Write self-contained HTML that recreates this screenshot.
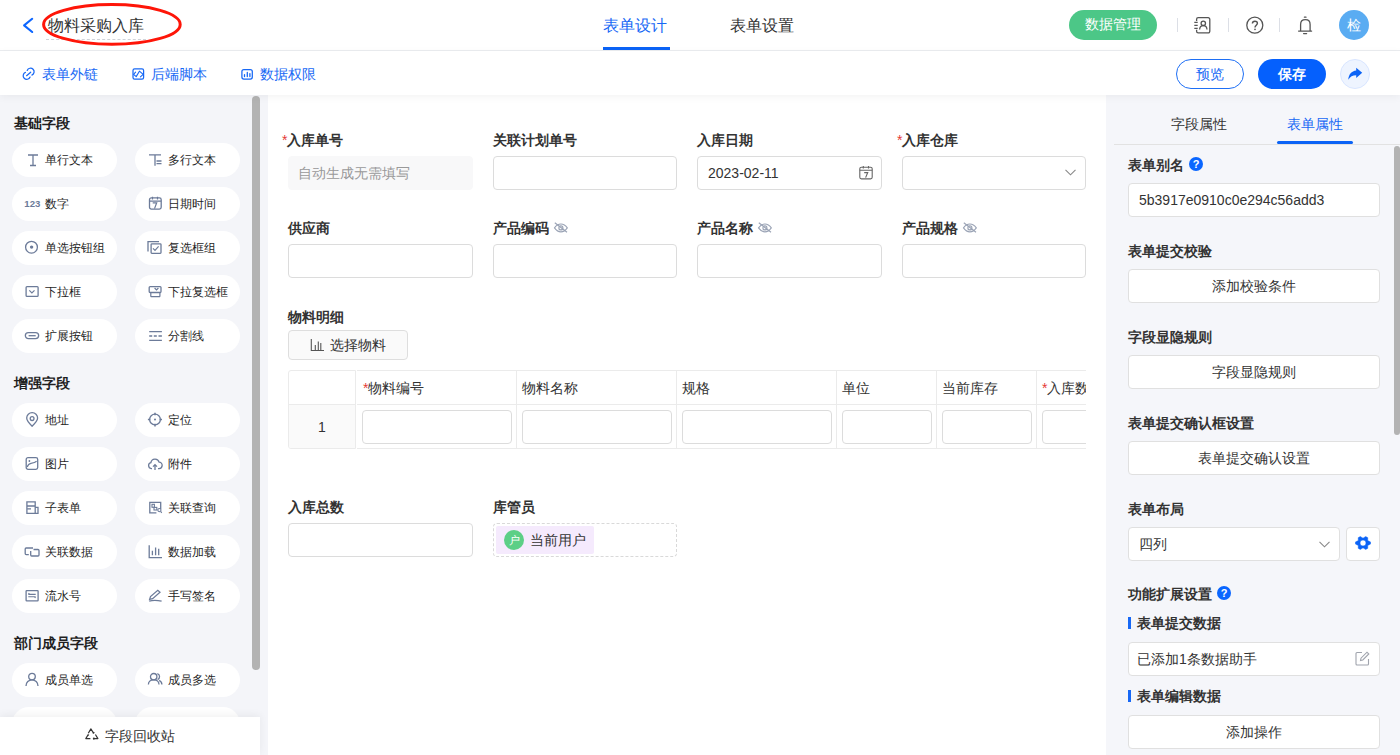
<!DOCTYPE html>
<html><head><meta charset="utf-8">
<style>
*{box-sizing:border-box;margin:0;padding:0}
html,body{width:1400px;height:755px;overflow:hidden;background:#fff;font-family:"Liberation Sans",sans-serif;color:#333}
.abs{position:absolute}
.t{position:absolute;white-space:nowrap;line-height:1}
svg{position:absolute;overflow:visible}
/* header */
#hdr{position:absolute;left:0;top:0;width:1400px;height:51px;background:#fff;border-bottom:1px solid #ebedf0}
#bar{position:absolute;left:0;top:51px;width:1400px;height:44px;background:#fff;z-index:3;box-shadow:0 2px 8px rgba(0,0,0,.05)}
#left{position:absolute;left:0;top:95px;width:268px;height:660px;background:#f4f5f9}
#canvas{position:absolute;left:268px;top:95px;width:838px;height:660px;background:#fff}
#right{position:absolute;left:1106px;top:95px;width:294px;height:660px;background:#f5f6fa}
.pill{position:absolute;width:105px;height:34px;border-radius:17px;background:#fff}
.pill span{position:absolute;left:33px;top:10px;font-size:12px;line-height:14px;color:#1f1f1f;white-space:nowrap}
.pill svg{left:12px;top:9px}
.sec{position:absolute;left:14px;font-size:14px;font-weight:bold;color:#1f1f1f;line-height:14px}
.lbl{position:absolute;font-size:14px;font-weight:bold;color:#333;line-height:14px;white-space:nowrap}
.req{color:#e53935;font-weight:normal;font-size:14px}
.inp{position:absolute;height:34px;border:1px solid #dcdcdc;border-radius:4px;background:#fff}
.rlbl{position:absolute;left:1128px;font-size:14px;font-weight:bold;color:#333;line-height:14px;white-space:nowrap}
.rbtn{position:absolute;left:1128px;width:252px;height:34px;border:1px solid #e0e0e0;border-radius:4px;background:#fff;text-align:center;font-size:14px;line-height:32px;color:#333}
.th{position:absolute;top:371px;height:34px;font-size:14px;line-height:34px;color:#333;white-space:nowrap}
</style></head>
<body>
<div id="hdr">
  <svg style="left:0;top:0" width="60" height="50" viewBox="0 0 60 50"><path d="M32.2 18.8 L24.1 25.4 L32.2 32" fill="none" stroke="#0d66ff" stroke-width="2.1" stroke-linecap="round" stroke-linejoin="round"/></svg>
  <div class="t" style="left:48px;top:18px;font-size:16px;line-height:16px;color:#333">物料采购入库</div>
  <div class="abs" style="left:46px;top:39px;width:100px;border-top:1px dashed #d0d3d9"></div>
  <svg style="left:0;top:0" width="200" height="50" viewBox="0 0 200 50"><ellipse cx="111.9" cy="24.4" rx="68.3" ry="19.8" fill="none" stroke="#fe1508" stroke-width="3"/></svg>
  <div class="t" style="left:603px;top:18px;font-size:16px;line-height:16px;color:#1768f5">表单设计</div>
  <div class="abs" style="left:603px;top:47px;width:67px;height:3px;background:#0b63f6"></div>
  <div class="t" style="left:730px;top:18px;font-size:16px;line-height:16px;color:#333">表单设置</div>
  <div class="abs" style="left:1069px;top:10px;width:88px;height:30px;border-radius:15px;background:#4cc787;color:#fff;font-size:14px;line-height:29px;text-align:center">数据管理</div>
  <div class="abs" style="left:1177px;top:18px;width:1px;height:14px;background:#dcdfe6"></div>
  <div class="abs" style="left:1228px;top:18px;width:1px;height:14px;background:#dcdfe6"></div>
  <div class="abs" style="left:1279px;top:18px;width:1px;height:14px;background:#dcdfe6"></div>
  <svg style="left:1180px;top:0" width="140" height="50" viewBox="1180 0 140 50" fill="none" stroke="#555" stroke-width="1.3">
    <path d="M1196.6 21V19.3a1.6 1.6 0 0 1 1.6-1.6H1208.2a1.6 1.6 0 0 1 1.6 1.6V31.3a1.6 1.6 0 0 1-1.6 1.6H1198.2a1.6 1.6 0 0 1-1.6-1.6V29.8"/>
    <path d="M1194.3 22.4h3.4M1194.3 25.4h3.4M1194.3 28.3h3.4"/>
    <circle cx="1203.3" cy="23.3" r="2.2"/>
    <path d="M1199.6 29.5C1199.8 27 1201.3 25.7 1203.3 25.7S1206.8 27 1207 29.5"/>
    <circle cx="1254.8" cy="25.2" r="8"/>
    <path d="M1252.4 23.4C1252.4 21.8 1253.5 21.2 1254.9 21.2 1256.5 21.2 1257.4 22.1 1257.4 23.3 1257.4 25.1 1255 25.3 1255 27.4" stroke-width="1.4"/>
    <circle cx="1255" cy="29.3" r="0.85" fill="#555" stroke="none"/>
    <path d="M1304.4 17.2h1.6M1300.6 30.4V24.4C1300.6 21.3 1302.6 19.6 1305.4 19.6 1308.2 19.6 1310.1 21.3 1310.1 24.4V30.4M1298.6 31.1H1311.6M1303.6 33.6h3" stroke-linecap="round"/>
  </svg>
  <div class="abs" style="left:1339px;top:10px;width:30px;height:30px;border-radius:15px;background:#5aacf2;color:#fff;font-size:14px;line-height:30px;text-align:center">检</div>
</div>
<div id="bar">
  <svg style="left:0;top:0" width="300" height="44" viewBox="0 51 300 44" fill="none" stroke="#1768f5" stroke-width="1.25" stroke-linecap="round">
    <path d="M27.2 70.4A3.6 3.6 0 1 1 31.9 75.1M30.1 77.1A3.6 3.6 0 1 1 25.4 72.4M26.6 75.7L30.7 72.2"/>
    <rect x="133" y="68.8" width="10.6" height="10.4" rx="1.6" stroke-linecap="butt"/>
    <path d="M135.6 72.2L133.6 74.4 136.2 76.6 139.4 71.2 143.2 74.4 140.4 76.8" stroke-width="1.1" stroke-linejoin="round"/>
    <rect x="241.9" y="69.6" width="10.4" height="9.4" rx="2" stroke-linecap="butt"/>
    <path d="M244.5 74.6v2M247.3 72.4v4.2M249.9 73.6v3" stroke-width="1.3"/>
  </svg>
  <div class="t" style="left:42px;top:16px;font-size:14px;line-height:14px;color:#1768f5">表单外链</div>
  <div class="t" style="left:151px;top:16px;font-size:14px;line-height:14px;color:#1768f5">后端脚本</div>
  <div class="t" style="left:260px;top:16px;font-size:14px;line-height:14px;color:#1768f5">数据权限</div>
  <div class="abs" style="left:1176px;top:8px;width:68px;height:30px;border-radius:15px;border:1px solid #1e6ff5;color:#1768f5;font-size:14px;line-height:28px;text-align:center">预览</div>
  <div class="abs" style="left:1258px;top:8px;width:68px;height:30px;border-radius:15px;background:#0560fd;color:#fff;font-size:14px;line-height:30px;text-align:center;font-weight:bold">保存</div>
  <div class="abs" style="left:1340px;top:8px;width:30px;height:30px;border-radius:15px;background:#eef4ff;border:1px solid #d9e6ff"></div>
  <svg style="left:1300px;top:0" width="100" height="44" viewBox="1300 51 100 44"><path d="M1362.2 72.8L1356.2 67.8V70.6C1351.6 71 1348.6 74.6 1348.3 79.8 1350.2 76.6 1352.6 75.3 1356.2 75.3V77.9Z" fill="#0b63f6"/></svg>
</div>

<div id="left">
  <div class="abs" style="left:252px;top:1px;width:8px;height:574px;border-radius:4px;background:#b3b3b3"></div>
  <div class="sec" style="top:21px">基础字段</div>
  <div class="pill" style="left:12px;top:48px"><svg width="16" height="16" viewBox="0 0 16 16" fill="none" stroke="#6c7b99" stroke-width="1.3"><path d="M4 3h10M6 13.5h6M9 3v10.5"/></svg><span>单行文本</span></div>
  <div class="pill" style="left:135px;top:48px"><svg width="16" height="16" viewBox="0 0 16 16" fill="none" stroke="#6c7b99" stroke-width="1.3"><path d="M2 2.8h12M8 2.8v11M9.5 9h5M9.5 11.6h5"/></svg><span>多行文本</span></div>
  <div class="pill" style="left:12px;top:92px"><svg width="16" height="16" viewBox="0 0 16 16" fill="none" stroke="#6c7b99" stroke-width="1.3"><text x="0.3" y="10.8" font-size="9.6" font-weight="bold" fill="#6c7b99" stroke="none" font-family="Liberation Sans">123</text></svg><span>数字</span></div>
  <div class="pill" style="left:135px;top:92px"><svg width="16" height="16" viewBox="0 0 16 16" fill="none" stroke="#6c7b99" stroke-width="1.3"><rect x="2.5" y="1.9" width="11.7" height="11.2" rx="1.8"/><path d="M2.5 5.1h11.7M5.5 0.8v2.8M10.5 0.8v2.8M5.7 6.8h4L7.5 12.6" stroke-width="1.2"/></svg><span>日期时间</span></div>
  <div class="pill" style="left:12px;top:136px"><svg width="16" height="16" viewBox="0 0 16 16" fill="none" stroke="#6c7b99" stroke-width="1.3"><circle cx="7.5" cy="7.2" r="5.9"/><circle cx="7.6" cy="7.1" r="1.7" fill="#6c7b99" stroke="none"/></svg><span>单选按钮组</span></div>
  <div class="pill" style="left:135px;top:136px"><svg width="16" height="16" viewBox="0 0 16 16" fill="none" stroke="#6c7b99" stroke-width="1.3"><path d="M1 11.6V1.6h11"/><rect x="4.1" y="3.8" width="9.9" height="9.5" rx="0.8"/><path d="M6 8.4l2 2 3.6-4" stroke-width="1.2"/></svg><span>复选框组</span></div>
  <div class="pill" style="left:12px;top:180px"><svg width="16" height="16" viewBox="0 0 16 16" fill="none" stroke="#6c7b99" stroke-width="1.3"><rect x="2.1" y="2.6" width="12" height="9.7" rx="0.9"/><path d="M5.3 6.4l2.6 2.6 2.6-2.6" stroke-width="1.2"/></svg><span>下拉框</span></div>
  <div class="pill" style="left:135px;top:180px"><svg width="16" height="16" viewBox="0 0 16 16" fill="none" stroke="#6c7b99" stroke-width="1.3"><rect x="2.2" y="2.6" width="11.8" height="5.9" rx="0.9"/><path d="M3.8 8.5v3.6a0.6 0.6 0 0 0 0.6 0.6h7.9a0.6 0.6 0 0 0 0.6-0.6V8.5M7.6 4l1.9 1.9 1.9-1.9" stroke-width="1.2"/></svg><span>下拉复选框</span></div>
  <div class="pill" style="left:12px;top:224px"><svg width="16" height="16" viewBox="0 0 16 16" fill="none" stroke="#6c7b99" stroke-width="1.3"><rect x="1.35" y="4.55" width="13.3" height="6.1" rx="3.05"/><path d="M4.6 7.7h7.1"/></svg><span>扩展按钮</span></div>
  <div class="pill" style="left:135px;top:224px"><svg width="16" height="16" viewBox="0 0 16 16" fill="none" stroke="#6c7b99" stroke-width="1.3"><path d="M2.2 3.7h12.7M2.2 12.4h12.7M2.2 8h3M6.8 8h3M11.5 8h3.4"/></svg><span>分割线</span></div>
  <div class="sec" style="top:281px">增强字段</div>
  <div class="pill" style="left:12px;top:308px"><svg width="16" height="16" viewBox="0 0 16 16" fill="none" stroke="#6c7b99" stroke-width="1.3"><path d="M8.1 14.2C4.5 10.8 2.7 8.4 2.7 6.1A5.4 5.4 0 0 1 13.6 6.1C13.6 8.4 11.7 10.8 8.1 14.2Z"/><circle cx="8.1" cy="6.6" r="1.9"/></svg><span>地址</span></div>
  <div class="pill" style="left:135px;top:308px"><svg width="16" height="16" viewBox="0 0 16 16" fill="none" stroke="#6c7b99" stroke-width="1.3"><circle cx="8" cy="7.5" r="5.4"/><circle cx="8" cy="7.5" r="1" fill="#6c7b99" stroke="none"/><path d="M8 0.8v2.4M8 11.8v2.6M0.9 7.5h2.4M12.6 7.5h2.4" stroke-width="1.5"/></svg><span>定位</span></div>
  <div class="pill" style="left:12px;top:352px"><svg width="16" height="16" viewBox="0 0 16 16" fill="none" stroke="#6c7b99" stroke-width="1.3"><rect x="2.2" y="1.7" width="11.5" height="11.6" rx="1.8"/><path d="M3.2 11C4 8.5 5 7.6 7 7.3 9.5 7 11 6.8 12.6 5.3" stroke-width="1.2"/><circle cx="5.4" cy="5" r="0.9" fill="#6c7b99" stroke="none"/></svg><span>图片</span></div>
  <div class="pill" style="left:135px;top:352px"><svg width="16" height="16" viewBox="0 0 16 16" fill="none" stroke="#6c7b99" stroke-width="1.3"><path d="M5 12.6H4.3A3 3 0 0 1 3.9 6.7 4.2 4.2 0 0 1 12.1 6.2 3.2 3.2 0 0 1 11.8 12.6H11"/><path d="M8 14V8.6M6 10.6L8 8.6 10 10.6"/></svg><span>附件</span></div>
  <div class="pill" style="left:12px;top:396px"><svg width="16" height="16" viewBox="0 0 16 16" fill="none" stroke="#6c7b99" stroke-width="1.3"><path d="M11.2 7.3V1.9H2.9v11.4h11.1V7.3H11.2v6M2.9 6h8.3M3.6 8.9h3.4"/></svg><span>子表单</span></div>
  <div class="pill" style="left:135px;top:396px"><svg width="16" height="16" viewBox="0 0 16 16" fill="none" stroke="#6c7b99" stroke-width="1.3"><path d="M13.7 9V2.4H2.8v10.5h6.6"/><rect x="5" y="4.3" width="2.4" height="3" stroke-width="1.1"/><rect x="7" y="7.4" width="2.8" height="2.6" stroke-width="1.1"/><circle cx="12.4" cy="10.1" r="1.6" stroke-width="1.1"/><path d="M13.6 11.4l1.2 1.4" stroke-width="1.1"/></svg><span>关联查询</span></div>
  <div class="pill" style="left:12px;top:440px"><svg width="16" height="16" viewBox="0 0 16 16" fill="none" stroke="#6c7b99" stroke-width="1.3"><path d="M9 4H2.2a1 1 0 0 0-1 1V9.6a1 1 0 0 0 1 1H4.8"/><path d="M6.7 6.9V11a1 1 0 0 0 1 1h6.3a1 1 0 0 0 1-1V6.5a1 1 0 0 0-1-1H9.5"/></svg><span>关联数据</span></div>
  <div class="pill" style="left:135px;top:440px"><svg width="16" height="16" viewBox="0 0 16 16" fill="none" stroke="#6c7b99" stroke-width="1.3"><path d="M2.2 1.3v12.4h12.8M5.4 6.7v4.5M8.6 3.5v7.7M11.7 4.8v6.4"/></svg><span>数据加载</span></div>
  <div class="pill" style="left:12px;top:484px"><svg width="16" height="16" viewBox="0 0 16 16" fill="none" stroke="#6c7b99" stroke-width="1.3"><rect x="2.1" y="2.7" width="12" height="10.1" rx="0.6"/><path d="M4.3 6.4h7.4M4.3 8.7h7.4M5.3 5.2l-1 1.2M10.7 9.9l1-1.2" stroke-width="1.1"/></svg><span>流水号</span></div>
  <div class="pill" style="left:135px;top:484px"><svg width="16" height="16" viewBox="0 0 16 16" fill="none" stroke="#6c7b99" stroke-width="1.3"><path d="M2.6 11.4 3.5 8.6 10.8 2.3 13 4.2 5.6 10.6Z" stroke-width="1.25"/><path d="M2.2 13.2C5 12.2 11 12.3 14.6 13.2" stroke-width="1.3"/></svg><span>手写签名</span></div>
  <div class="sec" style="top:541px">部门成员字段</div>
  <div class="pill" style="left:12px;top:568px"><svg width="16" height="16" viewBox="0 0 16 16" fill="none" stroke="#6c7b99" stroke-width="1.3"><circle cx="8" cy="4.6" r="3.3"/><path d="M2 14.1C2 10.4 4.7 7.8 8 7.8S14 10.4 14 14.1"/></svg><span>成员单选</span></div>
  <div class="pill" style="left:135px;top:568px"><svg width="16" height="16" viewBox="0 0 16 16" fill="none" stroke="#6c7b99" stroke-width="1.3"><circle cx="6.7" cy="4.7" r="3.2"/><path d="M1.4 12.5C1.4 9.6 3.8 7.8 6.7 7.8S12 9.6 12 12.5M10.3 1.6A3.2 3.2 0 0 1 10.6 7.6M12.2 8.4C13.9 9.3 14.9 10.8 14.9 12.5"/></svg><span>成员多选</span></div>
  <div class="pill" style="left:12px;top:612px"></div>
  <div class="pill" style="left:135px;top:612px"></div>
  <div class="abs" style="left:0;top:622px;width:260px;height:38px;background:#fff;box-shadow:0 -2px 8px rgba(0,0,0,.06)">
    <svg style="left:84px;top:10px" width="16" height="16" viewBox="0 0 16 16" fill="none" stroke="#333" stroke-width="1.2" stroke-linejoin="round"><path d="M4.3 6.2 6.9 1.9 9.6 6.2M8.6 5.6 9.6 6.2 10.1 5M11.4 7.5 13.9 11.6H9.4M10.3 10.6 9.4 11.6 10.3 12.6M6.4 11.6H1.8L4.1 7.8M3.4 8.6 4.1 7.8 5 8.2"/></svg>
    <div class="t" style="left:105px;top:12px;font-size:14px;line-height:14px;color:#333">字段回收站</div>
  </div>
</div>

<div id="canvas">
</div>

<!-- canvas contents (absolute page coords) -->
<div class="lbl" style="left:282px;top:133px"><span class="req">*</span>入库单号</div>
<div class="inp" style="left:288px;top:156px;width:185px;background:#f8f8f9;border-color:#f8f8f9"></div>
<div class="t" style="left:298px;top:166px;font-size:14px;line-height:14px;color:#999">自动生成无需填写</div>
<div class="lbl" style="left:493px;top:133px">关联计划单号</div>
<div class="inp" style="left:493px;top:156px;width:184px"></div>
<div class="lbl" style="left:697px;top:133px">入库日期</div>
<div class="inp" style="left:697px;top:156px;width:185px"></div>
<div class="t" style="left:708px;top:166px;font-size:14px;line-height:14px;color:#333">2023-02-11</div>
<svg style="left:852px;top:160px" width="26" height="24" viewBox="852 160 26 24" fill="none" stroke="#666" stroke-width="1.1"><rect x="859.8" y="167.2" width="12.4" height="11.7" rx="1.6"/><path d="M859.8 170.3h12.4M863.3 165.9v2.6M868.5 165.9v2.6"/><path d="M864.2 172.6h3.5L865.6 177.6" stroke-width="1.15"/></svg>
<div class="lbl" style="left:897px;top:133px"><span class="req">*</span>入库仓库</div>
<div class="inp" style="left:902px;top:156px;width:184px"></div>
<svg style="left:1065px;top:169px" width="11" height="7" viewBox="0 0 11 7"><path d="M0.5 0.8L5.5 5.8 10.5 0.8" fill="none" stroke="#888" stroke-width="1.1"/></svg>

<div class="lbl" style="left:288px;top:221px">供应商</div>
<div class="inp" style="left:288px;top:244px;width:185px"></div>
<div class="lbl" style="left:493px;top:221px">产品编码</div>
<svg style="left:553px;top:222px" width="16" height="13" viewBox="0 0 16 13" fill="none" stroke="#9aa3b5" stroke-width="1.15"><path d="M1.5 5.9C3.3 3.3 5.4 2 7.9 2S12.5 3.3 14.3 5.9C12.5 8.5 10.4 9.9 7.9 9.9S3.3 8.5 1.5 5.9Z"/><circle cx="7.9" cy="5.9" r="2"/><path d="M1.8 0.8L14 10.2"/></svg>
<div class="inp" style="left:493px;top:244px;width:184px"></div>
<div class="lbl" style="left:697px;top:221px">产品名称</div>
<svg style="left:757px;top:222px" width="16" height="13" viewBox="0 0 16 13" fill="none" stroke="#9aa3b5" stroke-width="1.15"><path d="M1.5 5.9C3.3 3.3 5.4 2 7.9 2S12.5 3.3 14.3 5.9C12.5 8.5 10.4 9.9 7.9 9.9S3.3 8.5 1.5 5.9Z"/><circle cx="7.9" cy="5.9" r="2"/><path d="M1.8 0.8L14 10.2"/></svg>
<div class="inp" style="left:697px;top:244px;width:185px"></div>
<div class="lbl" style="left:902px;top:221px">产品规格</div>
<svg style="left:962px;top:222px" width="16" height="13" viewBox="0 0 16 13" fill="none" stroke="#9aa3b5" stroke-width="1.15"><path d="M1.5 5.9C3.3 3.3 5.4 2 7.9 2S12.5 3.3 14.3 5.9C12.5 8.5 10.4 9.9 7.9 9.9S3.3 8.5 1.5 5.9Z"/><circle cx="7.9" cy="5.9" r="2"/><path d="M1.8 0.8L14 10.2"/></svg>
<div class="inp" style="left:902px;top:244px;width:184px"></div>

<div class="lbl" style="left:288px;top:310px">物料明细</div>
<div class="abs" style="left:288px;top:330px;width:120px;height:30px;border:1px solid #dedede;border-radius:4px;background:#fafafa"></div>
<svg style="left:300px;top:330px" width="30" height="30" viewBox="300 330 30 30" fill="none" stroke="#555" stroke-width="1.1"><path d="M311.3 339v11.5H324M315.3 345v5.5M318.3 341.5v9M320.8 343v7.5"/></svg>
<div class="t" style="left:330px;top:338px;font-size:14px;line-height:14px;color:#333">选择物料</div>

<div class="abs" style="left:288px;top:370px;width:68px;height:79px;border:1px solid #ebebeb;border-radius:3px 0 0 3px;background:#fff;overflow:hidden"><div class="abs" style="left:0;top:33px;width:66px;height:44px;background:#fafafa;border-top:1px solid #ebebeb"></div></div>
<div class="abs" style="left:357px;top:370px;width:729px;height:79px;border-top:1px solid #ebebeb;border-bottom:1px solid #ebebeb"></div>
<div class="abs" style="left:357px;top:404px;width:729px;height:1px;background:#ebebeb"></div>
<div class="abs" style="left:516px;top:371px;width:1px;height:77px;background:#ebebeb"></div>
<div class="abs" style="left:676px;top:371px;width:1px;height:77px;background:#ebebeb"></div>
<div class="abs" style="left:836px;top:371px;width:1px;height:77px;background:#ebebeb"></div>
<div class="abs" style="left:936px;top:371px;width:1px;height:77px;background:#ebebeb"></div>
<div class="abs" style="left:1036px;top:371px;width:1px;height:77px;background:#ebebeb"></div>
<div class="th" style="left:363px"><span class="req">*</span>物料编号</div>
<div class="th" style="left:522px">物料名称</div>
<div class="th" style="left:682px">规格</div>
<div class="th" style="left:842px">单位</div>
<div class="th" style="left:942px">当前库存</div>
<div class="abs" style="left:1036px;top:371px;width:50px;height:34px;overflow:hidden"><div class="th" style="left:6px;top:0"><span class="req">*</span>入库数量</div></div>
<div class="t" style="left:318px;top:420px;font-size:14px;line-height:14px;color:#333">1</div>
<div class="inp" style="left:362px;top:410px;width:150px"></div>
<div class="inp" style="left:522px;top:410px;width:150px"></div>
<div class="inp" style="left:682px;top:410px;width:150px"></div>
<div class="inp" style="left:842px;top:410px;width:90px"></div>
<div class="inp" style="left:942px;top:410px;width:90px"></div>
<div class="abs" style="left:1036px;top:405px;width:50px;height:44px;overflow:hidden"><div class="inp" style="left:6px;top:5px;width:90px"></div></div>

<div class="lbl" style="left:288px;top:500px">入库总数</div>
<div class="inp" style="left:288px;top:523px;width:185px"></div>
<div class="lbl" style="left:493px;top:500px">库管员</div>
<div class="abs" style="left:493px;top:523px;width:184px;height:34px;border:1px dashed #d9d9d9;border-radius:4px"></div>
<div class="abs" style="left:496px;top:526px;width:98px;height:28px;background:#f5eafd;border-radius:2px"></div>
<div class="abs" style="left:504px;top:530px;width:20px;height:20px;border-radius:10px;background:#5ccf86;color:#fff;font-size:11px;line-height:20px;text-align:center">户</div>
<div class="t" style="left:530px;top:533px;font-size:14px;line-height:14px;color:#333">当前用户</div>

<div id="right">
  <div class="t" style="left:65px;top:22px;font-size:14px;line-height:14px;color:#333">字段属性</div>
  <div class="t" style="left:181px;top:22px;font-size:14px;line-height:14px;color:#1768f5">表单属性</div>
  <div class="abs" style="left:8px;top:49px;width:286px;height:1px;background:#e2e2e2"></div>
  <div class="abs" style="left:171px;top:46px;width:76px;height:3px;border-radius:1.5px;background:#0b63f6"></div>
  <div class="abs" style="left:288px;top:51px;width:6px;height:289px;border-radius:3px;background:#b3b3b3"></div>
</div>
<div class="rlbl" style="top:158px">表单别名</div>
<div class="abs" style="left:1189px;top:157px;width:14px;height:14px;border-radius:7px;background:#0a66ff;color:#fff;font-size:11px;font-weight:bold;line-height:14px;text-align:center">?</div>
<div class="inp" style="left:1128px;top:183px;width:252px;border-color:#e0e0e0"></div>
<div class="t" style="left:1139px;top:193px;font-size:14px;line-height:14px;color:#333">5b3917e0910c0e294c56add3</div>
<div class="rlbl" style="top:244px">表单提交校验</div>
<div class="rbtn" style="top:269px">添加校验条件</div>
<div class="rlbl" style="top:330px">字段显隐规则</div>
<div class="rbtn" style="top:355px">字段显隐规则</div>
<div class="rlbl" style="top:416px">表单提交确认框设置</div>
<div class="rbtn" style="top:441px">表单提交确认设置</div>
<div class="rlbl" style="top:502px">表单布局</div>
<div class="inp" style="left:1128px;top:527px;width:212px;border-color:#e0e0e0"></div>
<div class="t" style="left:1139px;top:537px;font-size:14px;line-height:14px;color:#333">四列</div>
<svg style="left:1319px;top:541px" width="11" height="7" viewBox="0 0 11 7"><path d="M0.5 0.8L5.5 5.8 10.5 0.8" fill="none" stroke="#888" stroke-width="1.1"/></svg>
<div class="inp" style="left:1346px;top:527px;width:34px;border-color:#e0e0e0"></div>
<svg style="left:1355px;top:535.3px" width="16" height="16" viewBox="0 0 16 16"><path d="M13.56 5.98 L15.51 6.93 L15.51 9.07 L13.56 10.02 L12.68 10.43 L12.73 11.32 L12.78 13.32 L10.72 14.39 L8.84 13.35 L8.00 12.86 L7.16 13.35 L5.28 14.39 L3.22 13.32 L3.27 11.32 L3.32 10.43 L2.44 10.02 L0.49 9.07 L0.49 6.93 L2.44 5.98 L3.32 5.57 L3.27 4.68 L3.22 2.68 L5.28 1.61 L7.16 2.65 L8.00 3.14 L8.84 2.65 L10.72 1.61 L12.78 2.68 L12.73 4.68 L12.68 5.57Z M8 5A3 3 0 1 0 8 11A3 3 0 1 0 8 5Z" fill="#0b63f6" fill-rule="evenodd" stroke="#0b63f6" stroke-width="0.5" stroke-linejoin="round"/></svg>
<div class="rlbl" style="top:587px">功能扩展设置</div>
<div class="abs" style="left:1217px;top:586px;width:14px;height:14px;border-radius:7px;background:#0a66ff;color:#fff;font-size:11px;font-weight:bold;line-height:14px;text-align:center">?</div>
<div class="abs" style="left:1128px;top:617px;width:3px;height:12px;background:#1768f5"></div>
<div class="rlbl" style="left:1137px;top:616px">表单提交数据</div>
<div class="inp" style="left:1128px;top:642px;width:252px;border-color:#e0e0e0"></div>
<div class="t" style="left:1137px;top:652px;font-size:14px;line-height:14px;color:#333">已添加1条数据助手</div>
<svg style="left:1355px;top:651px" width="15" height="15" viewBox="0 0 15 15"><path d="M7 1.5H2A1 1 0 0 0 1 2.5V13A1 1 0 0 0 2 14H12.5A1 1 0 0 0 13.5 13V8" fill="none" stroke="#a0a4ad" stroke-width="1.1"/><path d="M5.5 9.5L6 7.2 12 1.2 13.8 3 7.8 9Z" fill="none" stroke="#a0a4ad" stroke-width="1.1"/></svg>
<div class="abs" style="left:1128px;top:690px;width:3px;height:12px;background:#1768f5"></div>
<div class="rlbl" style="left:1137px;top:689px">表单编辑数据</div>
<div class="rbtn" style="top:715px">添加操作</div>
</body></html>
